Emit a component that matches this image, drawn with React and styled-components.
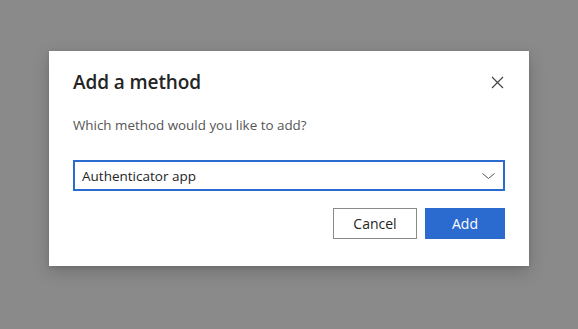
import React, { useState } from "react";
import styled, { createGlobalStyle } from "styled-components";

const GlobalStyle = createGlobalStyle`
  html, body {
    margin: 0;
    padding: 0;
    height: 100%;
    background: #8a8a8a;
  }
  body {
    font-family: "Open Sans", "Noto Sans", "Liberation Sans", sans-serif;
  }
`;

const Overlay = styled.div`
  width: 578px;
  height: 329px;
  box-sizing: border-box;
  padding: 51px 0 0 49px;
  background: #8a8a8a;
`;

const Dialog = styled.div`
  width: 480px;
  box-sizing: border-box;
  padding: 17px 24px 27px 24px;
  background: #ffffff;
  box-shadow: 0 6px 16px rgba(0, 0, 0, 0.18), 0 1px 4px rgba(0, 0, 0, 0.12);
`;

const Header = styled.div`
  display: flex;
  align-items: center;
  justify-content: space-between;
  height: 28px;
`;

const Title = styled.h2`
  margin: 0;
  font-size: 19px;
  line-height: 28px;
  font-weight: 600;
  color: #242424;
  letter-spacing: -0.1px;
`;

const CloseButton = styled.button`
  display: flex;
  align-items: center;
  justify-content: center;
  width: 20px;
  height: 20px;
  margin-right: -2px;
  padding: 0;
  border: none;
  background: transparent;
  cursor: pointer;
`;

const Prompt = styled.p`
  margin: 19px 0 0;
  font-size: 13.4px;
  line-height: 20px;
  color: #555555;
`;

const SelectBox = styled.div`
  display: flex;
  align-items: center;
  justify-content: space-between;
  margin-top: 25px;
  height: 31px;
  box-sizing: border-box;
  padding: 0 8px 0 7px;
  border: 2px solid #2b6bd0;
  cursor: pointer;
`;

const SelectValue = styled.span`
  font-size: 13.5px;
  color: #242424;
`;

const Actions = styled.div`
  display: flex;
  justify-content: flex-end;
  gap: 8px;
  margin-top: 17px;
`;

const Button = styled.button`
  height: 31px;
  min-width: ${p => p.$width}px;
  box-sizing: border-box;
  padding: 0 12px;
  font-family: inherit;
  font-size: 14px;
  font-weight: 500;
  cursor: pointer;
  border: 1px solid ${p => (p.$primary ? "#2b6bd0" : "#8a8a8a")};
  background: ${p => (p.$primary ? "#2b6bd0" : "#ffffff")};
  color: ${p => (p.$primary ? "#ffffff" : "#242424")};
`;

const CloseIcon = () => (
  <svg width="13" height="13" viewBox="0 0 13 13">
    <path d="M1 1 L12 12 M12 1 L1 12" stroke="#444" strokeWidth="1.2" fill="none" />
  </svg>
);

const Chevron = () => (
  <svg width="13" height="6" viewBox="0 0 13 6">
    <path d="M0.5 0.5 L6.5 5.5 L12.5 0.5" stroke="#555" strokeWidth="1" fill="none" />
  </svg>
);

const App = () => {
  const [method] = useState("Authenticator app");

  return (
    <>
      <GlobalStyle />
      <Overlay>
        <Dialog>
          <Header>
            <Title>Add a method</Title>
            <CloseButton aria-label="Close">
              <CloseIcon />
            </CloseButton>
          </Header>
          <Prompt>Which method would you like to add?</Prompt>
          <SelectBox>
            <SelectValue>{method}</SelectValue>
            <Chevron />
          </SelectBox>
          <Actions>
            <Button $width={84}>Cancel</Button>
            <Button $width={80} $primary>Add</Button>
          </Actions>
        </Dialog>
      </Overlay>
    </>
  );
};

export default App;
